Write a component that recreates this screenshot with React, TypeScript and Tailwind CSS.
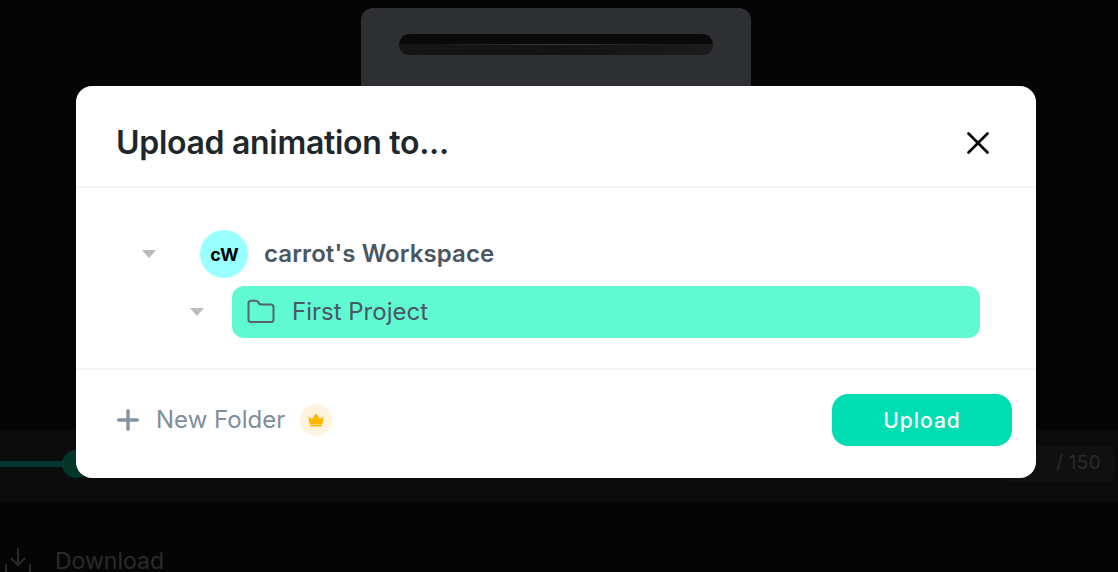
import { X, Plus, Folder, Download } from "lucide-react";

const inter = "font-['Inter',sans-serif]";

function Caret() {
  return (
    <svg width="16" height="10" viewBox="0 0 16 10" className="shrink-0">
      <path d="M1 1h14L9 8.1a1.3 1.3 0 0 1-2 0z" fill="#bcbcbc" />
    </svg>
  );
}

function Crown() {
  return (
    <svg width="16" height="14" viewBox="0 0 16 14">
      <path d="M0.4 3.4l3.8 2.7L7.2 1.2a1 1 0 0 1 1.6 0l3 4.9 3.8-2.7-1.3 8H1.7z" fill="#ffb800" />
      <rect x="2" y="12" width="12" height="1.6" rx="0.5" fill="#ffb800" />
    </svg>
  );
}

function Backdrop() {
  return (
    <div className="flex h-[572px] flex-col bg-[#050505] pt-2">
      {/* device preview behind the dialog */}
      <div className="ml-[361px] h-[100px] w-[390px] shrink-0 rounded-t-xl bg-[#2e2f33] px-[38px] pt-[26px]">
        <div className="h-[21px] overflow-hidden rounded-full bg-[#0a0a0a] pt-[10px]">
          <div className="h-[11px] bg-linear-to-r from-[#161616] via-[#131313] to-[#1c1c1c]">
            <div className="mx-[34px] h-px bg-linear-to-r from-transparent via-[#3a3a3a] to-transparent" />
          </div>
        </div>
      </div>

      {/* player bar */}
      <div className="mt-[322px] flex h-[72px] w-full shrink-0 items-center bg-[#0b0b0b] pb-[5px]">
        <div className="h-1.5 w-[66px] bg-[#03362a]" />
        <div className="-ml-1 size-7 rounded-full bg-[#03362a]" />
        <div className="ml-auto mr-[3px] flex h-9 w-[115px] items-center justify-end rounded-lg bg-[#101010] pr-[14px]">
          <span className={`${inter} text-[19px] tracking-[0.3px] text-[#2a2a2a]`}>/ 150</span>
        </div>
      </div>

      {/* download action */}
      <div className="mt-[43px] flex w-full shrink-0 items-center gap-[21px] pl-[2px]">
        <Download size={32} strokeWidth={1.5} color="#2a2a2a" />
        <span className={`${inter} text-[23px] leading-none text-[#2a2a2a]`}>Download</span>
      </div>
    </div>
  );
}

export default function App() {
  return (
    <div className="relative h-[572px] w-[1118px] overflow-hidden">
      <Backdrop />

      <div className={`absolute left-[76px] top-[86px] flex h-[392px] w-[960px] flex-col rounded-2xl bg-white ${inter}`}>
        {/* Header */}
        <div className="flex h-[102px] shrink-0 items-center justify-between border-b-2 border-[#f3f6f8] pl-[40px] pr-[39px] pt-[13px]">
          <h2 className="text-[32px] font-semibold leading-none tracking-[-0.3px] text-[#20272c]">Upload animation to...</h2>
          <X size={38} strokeWidth={1.7} color="#000000" />
        </div>

        {/* Tree */}
        <div className="flex h-[182px] shrink-0 flex-col border-b-2 border-[#f3f6f8] pt-[42px]">
          <div className="flex h-12 items-center pl-[65px]">
            <Caret />
            <div className="ml-[43px] flex size-12 items-center justify-center rounded-full bg-[#99ffff] pl-px text-[18px] font-bold text-black">
              cW
            </div>
            <span className="ml-4 text-[24px] font-semibold tracking-[0.1px] text-[#4a5662]">carrot's Workspace</span>
          </div>
          <div className="mt-2 flex items-center pl-[113px]">
            <Caret />
            <div className="ml-[27px] flex h-[52px] w-[748px] items-center rounded-xl bg-[#5ffad2] pl-[14px]">
              <Folder size={30} strokeWidth={1.6} color="#56626c" />
              <span className="ml-[16px] text-[24px] text-[#4a5662]">First Project</span>
            </div>
          </div>
        </div>

        {/* Footer */}
        <div className="flex flex-1 items-center justify-between pb-2 pl-[36px] pr-6">
          <div className="flex items-center">
            <Plus size={32} strokeWidth={2.6} color="#8795a1" />
            <span className="ml-[12px] text-[24px] text-[#808e9b]">New Folder</span>
            <div className="ml-[15px] flex size-8 items-center justify-center rounded-full bg-[#fff3dd]">
              <Crown />
            </div>
          </div>
          <button className="h-[52px] w-[180px] rounded-2xl bg-[#00ddb3] pt-px text-[21px] font-medium tracking-[1px] text-white">
            Upload
          </button>
        </div>
      </div>
    </div>
  );
}
